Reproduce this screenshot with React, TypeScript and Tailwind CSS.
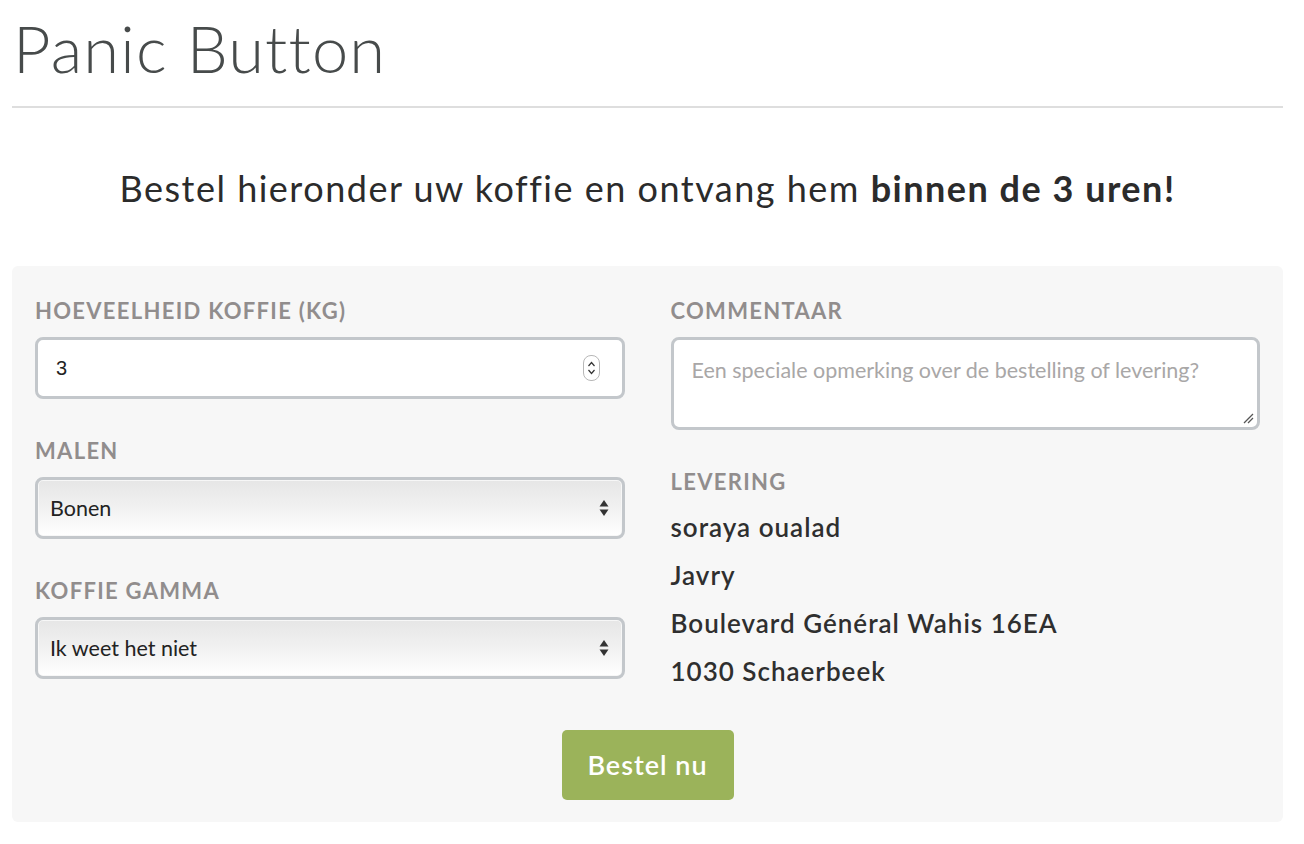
const SelectArrows = () => (
  <svg width="10" height="18" viewBox="0 0 10 18" className="pointer-events-none absolute right-[13px] top-1/2 -translate-y-1/2">
    <path d="M5 1 L9.5 7.5 L0.5 7.5 Z" fill="#333" />
    <path d="M5 17 L9.5 10.5 L0.5 10.5 Z" fill="#333" />
  </svg>
);

const Spinner = () => (
  <div className="absolute right-[22px] top-1/2 flex h-[26px] w-[17px] -translate-y-1/2 flex-col items-center justify-center rounded-[8px] border border-[#b8b8b8] bg-white">
    <svg width="9" height="18" viewBox="0 0 9 18">
      <path d="M1.5 7 L4.5 3.5 L7.5 7" fill="none" stroke="#333" strokeWidth="1.2" />
      <path d="M1.5 11 L4.5 14.5 L7.5 11" fill="none" stroke="#333" strokeWidth="1.2" />
    </svg>
  </div>
);

const Label = ({ children }: { children: React.ReactNode }) => (
  <div className="mb-[14px] font-['Lato',sans-serif] text-[22px] font-bold uppercase leading-[24px] tracking-[1.3px] text-[#918d8d]">
    {children}
  </div>
);

const Select = ({ value }: { value: string }) => (
  <div className="relative h-[62px] rounded-[8px] border-[3px] border-[#c3c7cb] bg-[linear-gradient(to_bottom,#e6e6e6_0%,#f0f0f0_45%,#ffffff_100%)] shadow-[inset_0_0_0_1px_#f7f7f7]">
    <div className="flex h-full items-center pl-[12px] font-['Lato',sans-serif] text-[21.5px] text-[#222]">{value}</div>
    <SelectArrows />
  </div>
);

const App = () => {
  const address = ['soraya oualad', 'Javry', 'Boulevard Général Wahis 16EA', '1030 Schaerbeek'];

  return (
    <div className="min-h-[844px] bg-white pl-[12px] pr-[21px] font-['Lato',sans-serif]">
      <h1 className="pt-[12px] pl-[1px] text-[65px] font-light leading-[72px] tracking-[1.2px] text-[#474b4b]">Panic Button</h1>
      <div className="mt-[22px] h-[2px] bg-[#dedede]" />

      <p className="mt-[60px] text-center text-[36px] leading-[40px] tracking-[1.5px] text-[#2b2b2b]">
        Bestel hieronder uw koffie en ontvang hem <strong className="font-bold">binnen de 3 uren!</strong>
      </p>

      <div className="mt-[58px] rounded-[6px] bg-[#f7f7f7] px-[23px] pt-[33px] pb-[22px]">
        <div className="grid grid-cols-2 gap-x-[46px]">
          <div>
            <Label>Hoeveelheid koffie (kg)</Label>
            <div className="relative h-[62px] rounded-[8px] border-[3px] border-[#c3c7cb] bg-white">
              <div className="flex h-full items-center pl-[18px] font-['Liberation_Sans',sans-serif] text-[20px] text-[#222]">3</div>
              <Spinner />
            </div>

            <div className="mt-[40px]">
              <Label>Malen</Label>
              <Select value="Bonen" />
            </div>

            <div className="mt-[40px]">
              <Label>Koffie gamma</Label>
              <Select value="Ik weet het niet" />
            </div>
          </div>

          <div>
            <Label>Commentaar</Label>
            <div className="relative h-[93px] rounded-[8px] border-[3px] border-[#c3c7cb] bg-white">
              <div className="pt-[14px] pl-[18px] text-[21.5px] text-[#a9a7a7]">Een speciale opmerking over de bestelling of levering?</div>
              <svg width="12" height="12" viewBox="0 0 12 12" className="absolute right-[3px] bottom-[3px]">
                <path d="M2 11 L11 2 M6 11 L11 6" stroke="#555" strokeWidth="1.3" />
              </svg>
            </div>

            <div className="mt-[40px]">
              <Label>Levering</Label>
              <div className="flex flex-col gap-[22px] pt-[6px]">
                {address.map((line) => (
                  <div key={line} className="text-[26px] font-semibold leading-[26px] tracking-[1px] text-[#2f2f2f]">
                    {line}
                  </div>
                ))}
              </div>
            </div>
          </div>
        </div>

        <div className="mt-[46px] flex justify-center">
          <button className="h-[70px] w-[172px] rounded-[5px] bg-[#9bb35a] text-[27px] font-semibold tracking-[1px] text-white">
            Bestel nu
          </button>
        </div>
      </div>
    </div>
  );
};

export default App;
